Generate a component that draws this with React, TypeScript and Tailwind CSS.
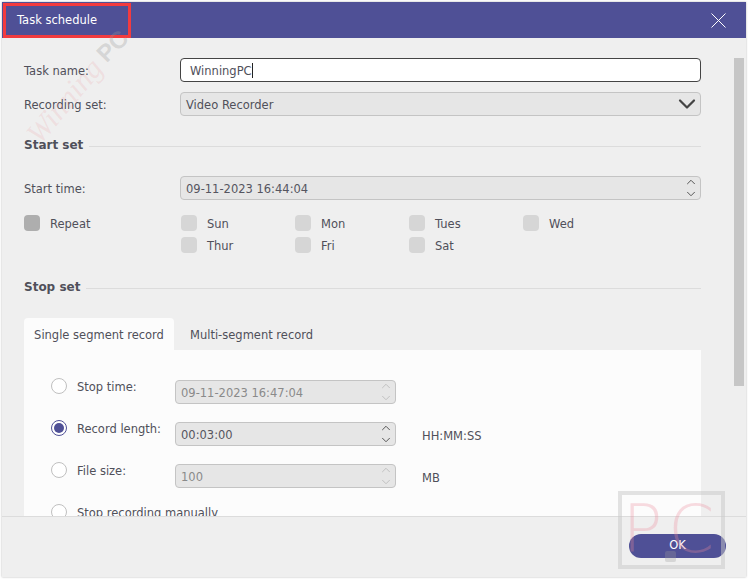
import { ChevronDown, ChevronUp } from 'lucide-react';

const DAYS = [
  ['Sun', 'Mon', 'Tues', 'Wed'],
  ['Thur', 'Fri', 'Sat'],
];

function Spinner({ value, disabled }: { value: string; disabled?: boolean }) {
  return (
    <div className={`flex h-6 items-center justify-between rounded border border-[#c4c4c4] bg-[#e6e6e6] pl-[5px] pr-[2px] ${disabled ? 'text-[#8a8a8a]' : 'text-[#555560]'}`}>
      <span className="pt-[3px]">{value}</span>
      <span className={`flex flex-col ${disabled ? 'text-[#c0c0c0]' : 'text-[#555555]'}`}>
        <ChevronUp size={14} strokeWidth={1.7} />
        <ChevronDown size={14} strokeWidth={1.7} className="-mt-[2px]" />
      </span>
    </div>
  );
}

function SectionTitle({ title }: { title: string }) {
  return (
    <div className="flex h-4 items-center gap-[6px]">
      <span className="pt-[2px] text-[12px] font-bold text-[#50505a]">{title}</span>
      <span className="mt-1 h-px flex-1 bg-[#dcdcdc]" />
    </div>
  );
}

function Radio({ checked }: { checked?: boolean }) {
  return (
    <span className={`flex size-4 shrink-0 items-center justify-center rounded-full border bg-white ${checked ? 'border-[#4f5096]' : 'border-[#c0c0c0]'}`}>
      {checked && <span className="size-[10px] rounded-full bg-[#4f5096]" />}
    </span>
  );
}

function RecordRow({ label, value, unit, checked, disabled }: { label: string; value: string; unit?: string; checked?: boolean; disabled?: boolean }) {
  return (
    <div className="flex h-6 items-start">
      <span className="-mt-[2px]"><Radio checked={checked} /></span>
      <span className="-mt-px ml-[10px] w-[98px] leading-4">{label}</span>
      <div className="w-[221px]"><Spinner value={value} disabled={disabled} /></div>
      {unit && <span className="ml-[26px] mt-[6px] leading-4">{unit}</span>}
    </div>
  );
}

export default function App() {
  return (
    <div className="relative h-[579px] w-[748px] overflow-hidden bg-white p-[2px] text-[11.5px] text-[#50505a] [font-family:'DejaVu_Sans','Liberation_Sans',sans-serif]">
      <div className="flex h-full flex-col bg-[#efefef] shadow-[0_0_2px_rgba(0,0,0,0.3)]">
        {/* Title bar */}
        <div className="flex h-9 shrink-0 items-center justify-between bg-[#4f5096] pl-[15px] pr-[20px] text-white">
          <span className="pt-px">Task schedule</span>
          <svg width="15" height="15" viewBox="0 0 15 15" stroke="currentColor" strokeWidth="1">
            <path d="M0.5 0.5 L14.5 14.5 M14.5 0.5 L0.5 14.5" />
          </svg>
        </div>

        {/* Scrolling form */}
        <div className="flex min-h-0 flex-1 overflow-hidden">
          <div className="w-[699px] shrink-0 pl-[22px] pt-5">
            <div className="flex h-6 items-center">
              <span className="w-[156px] pt-[3px]">Task name:</span>
              <div className="flex h-6 flex-1 items-center rounded border border-[#444444] bg-white pl-[9px] text-[#50505a]">
                <span className="pt-[3px]">WinningPC</span>
                <span className="h-[15px] w-px bg-[#222222]" />
              </div>
            </div>
            <div className="mt-[10px] flex h-6 items-center">
              <span className="w-[156px] pt-[3px]">Recording set:</span>
              <div className="flex h-6 flex-1 items-center justify-between rounded border border-[#c4c4c4] bg-[#e6e6e6] pl-[5px]">
                <span className="pt-[3px]">Video Recorder</span>
                <ChevronDown size={28} strokeWidth={1.9} className="-my-1 -mr-[1px] text-[#444444]" />
              </div>
            </div>

            <div className="mt-5"><SectionTitle title="Start set" /></div>

            <div className="mt-6 flex h-6 items-center">
              <span className="w-[156px] pt-[3px]">Start time:</span>
              <div className="flex-1"><Spinner value="09-11-2023 16:44:04" /></div>
            </div>

            <div className="mt-[15px] flex">
              <div className="flex h-4 w-[157px] items-center gap-[10px]">
                <span className="size-4 rounded-sm bg-[#aeaeae]" />
                <span className="pt-[3px]">Repeat</span>
              </div>
              <div className="flex flex-col gap-[6px]">
                {DAYS.map((row, i) => (
                  <div key={i} className="flex">
                    {row.map((day) => (
                      <div key={day} className="flex h-4 w-[114px] items-center gap-[10px]">
                        <span className="size-4 rounded-sm bg-[#d6d6d6]" />
                        <span className="pt-[3px]">{day}</span>
                      </div>
                    ))}
                  </div>
                ))}
              </div>
            </div>

            <div className="mt-[25px]"><SectionTitle title="Stop set" /></div>

            {/* Tabs */}
            <div className="mt-[24px] flex h-8">
              <div className="flex w-[150px] items-center justify-center rounded-t bg-[#fcfcfc] pt-[3px]">Single segment record</div>
              <div className="flex items-center pl-4 pt-[3px]">Multi-segment record</div>
            </div>
            <div className="flex flex-col gap-[18px] bg-[#fcfcfc] pl-[27px] pt-[30px]">
              <RecordRow label="Stop time:" value="09-11-2023 16:47:04" disabled />
              <RecordRow label="Record length:" value="00:03:00" unit="HH:MM:SS" checked />
              <RecordRow label="File size:" value="100" unit="MB" disabled />
              <div className="flex h-6 items-start gap-[10px]">
                <span className="-mt-[2px]"><Radio /></span>
                <span className="-mt-px leading-4">Stop recording manually</span>
              </div>
            </div>
          </div>
          <div className="ml-[33px] mt-5 h-[328px] w-[10px] bg-[#c6c6c6]" />
        </div>

        {/* Footer */}
        <div className="flex h-[61px] shrink-0 items-start justify-end border-t border-[#dcdcdc] bg-[#efefef] pr-5 pt-[17px]">
          <button className="h-6 w-[97px] rounded-full bg-[#4f5096] text-white">OK</button>
        </div>
      </div>

      {/* Highlight drawn over the title */}
      <div className="pointer-events-none absolute left-[3px] top-[3px] h-[35px] w-[128px] border-[3px] border-[#f23b3f]" />

      {/* Watermarks */}
      <div className="pointer-events-none absolute left-[14px] top-[78px] -rotate-[50deg] whitespace-nowrap text-[30px] italic text-[#ee9aa0]/20 [font-family:'Liberation_Serif',serif]">
        Winning
      </div>
      <div className="pointer-events-none absolute left-[96px] top-[28px] -rotate-[45deg] text-[24px] font-bold text-[#999999]/30 [font-family:'Liberation_Sans',sans-serif]">
        PC
      </div>
      <div className="pointer-events-none absolute left-[618px] top-[491px] flex h-[78px] w-[107px] items-center justify-center border-[4px] border-[#c8c8c8]/50 text-[66px] font-extralight leading-none tracking-[6px] text-[#eb8a9c]/30">
        PC
      </div>
      <div className="pointer-events-none absolute left-[665px] top-[551px] size-[11px] rounded-[2px] bg-[#9a9a9a]/30" />
    </div>
  );
}
